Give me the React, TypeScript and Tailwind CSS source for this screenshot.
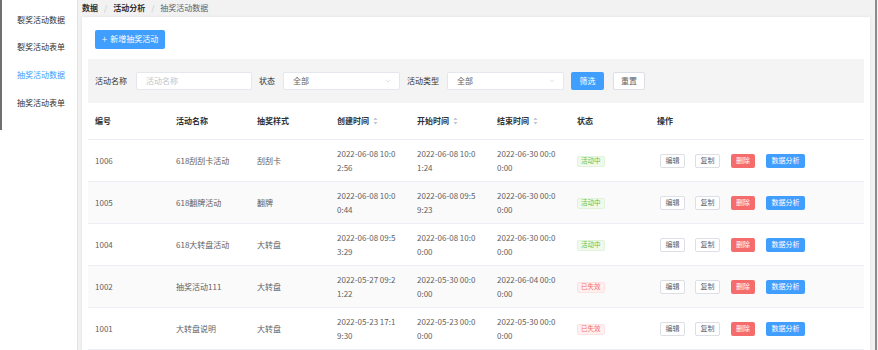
import { ChevronDown } from "lucide-react";

type Row = {
  id: string;
  name: string;
  style: string;
  created: string;
  start: string;
  end: string;
  active: boolean;
};

const rows: Row[] = [
  { id: "1006", name: "618刮刮卡活动", style: "刮刮卡", created: "2022-06-08 10:02:56", start: "2022-06-08 10:01:24", end: "2022-06-30 00:00:00", active: true },
  { id: "1005", name: "618翻牌活动", style: "翻牌", created: "2022-06-08 10:00:44", start: "2022-06-08 09:59:23", end: "2022-06-30 00:00:00", active: true },
  { id: "1004", name: "618大转盘活动", style: "大转盘", created: "2022-06-08 09:53:29", start: "2022-06-08 10:00:00", end: "2022-06-30 00:00:00", active: true },
  { id: "1002", name: "抽奖活动111", style: "大转盘", created: "2022-05-27 09:21:22", start: "2022-05-30 00:00:00", end: "2022-06-04 00:00:00", active: false },
  { id: "1001", name: "大转盘说明", style: "大转盘", created: "2022-05-23 17:19:30", start: "2022-05-23 00:00:00", end: "2022-05-30 00:00:00", active: false },
];

const menu = ["裂奖活动数据", "裂奖活动表单", "抽奖活动数据", "抽奖活动表单"];

const SortIcon = () => (
  <svg width="5" height="8" viewBox="0 0 5 8" className="ml-[4px]">
    <path d="M2.5 0.5 L4.5 3 L0.5 3 Z" fill="#c0c4cc" />
    <path d="M2.5 7.5 L4.5 5 L0.5 5 Z" fill="#c0c4cc" />
  </svg>
);

const Select = ({ w }: { w: string }) => (
  <div
    className={`${w} h-[18px] bg-white border border-[#e4e7ed] rounded-[2px] flex items-center justify-between pl-[9px] pr-[7px] text-[#606266]`}
  >
    <span>全部</span>
    <ChevronDown size={8} className="text-[#c0c4cc]" strokeWidth={1.5} />
  </div>
);

const App = () => {
  return (
    <div className="w-[878px] h-[350px] overflow-hidden flex bg-[#f2f2f2] text-[8px] font-['Noto_Sans_CJK_SC','Noto_Sans',sans-serif] text-[#606266]">
      {/* Sidebar */}
      <aside className="w-[78px] shrink-0 bg-white flex">
        <div className="w-[2px] h-[130px] bg-[#6f6f6f]" />
        <div className="flex-1 pt-[6px] pl-[15px] flex flex-col">
          {menu.map((m, i) => (
            <div
              key={m}
              className={`h-[27.6px] flex items-center ${i === 2 ? "text-[#409eff]" : "text-[#303133]"}`}
            >
              {m}
            </div>
          ))}
        </div>
        <div className="w-[1px] bg-[#e2e2e2]" />
      </aside>

      {/* Main */}
      <main className="flex-1 min-w-0 pl-[4px] pr-[5px] flex flex-col">
        <div className="h-[21px] pt-[3px] leading-[10px] flex items-start gap-[6px] text-[#303133]">
          <span className="font-bold">数据</span>
          <span className="text-[#c0c4cc]">/</span>
          <span className="font-bold">活动分析</span>
          <span className="text-[#c0c4cc]">/</span>
          <span className="text-[#606266]">抽奖活动数据</span>
        </div>

        <div className="flex-1 bg-white shadow-[0_0_3px_rgba(0,0,0,0.08)] px-[6px] pt-[13px]">
          <button className="ml-[7px] w-[70px] h-[19px] bg-[#409eff] text-white rounded-[2px] flex items-center justify-center gap-[3px]">
            <span className="text-[10px] leading-none font-light">+</span>
            <span>新增抽奖活动</span>
          </button>

          {/* Filter bar */}
          <div className="mt-[10px] h-[44px] bg-[#f4f4f5] flex items-center pl-[7px]">
            <span className="text-[#303133]">活动名称</span>
            <div className="ml-[9px] w-[116px] h-[18px] bg-white border border-[#e4e7ed] rounded-[2px] flex items-center pl-[9px] text-[#c0c4cc]">
              活动名称
            </div>
            <span className="ml-[7px] text-[#303133]">状态</span>
            <div className="ml-[8px]">
              <Select w="w-[117px]" />
            </div>
            <span className="ml-[7px] text-[#303133]">活动类型</span>
            <div className="ml-[8px]">
              <Select w="w-[117px]" />
            </div>
            <button className="ml-[7px] w-[33px] h-[18px] bg-[#409eff] text-white rounded-[2px]">
              筛选
            </button>
            <button className="ml-[9px] w-[32px] h-[18px] bg-white border border-[#dcdfe6] text-[#606266] rounded-[2px]">
              重置
            </button>
          </div>

          {/* Table */}
          <table className="w-full table-fixed border-collapse">
            <colgroup>
              <col className="w-[81px]" />
              <col className="w-[81px]" />
              <col className="w-[80px]" />
              <col className="w-[80px]" />
              <col className="w-[80px]" />
              <col className="w-[80px]" />
              <col className="w-[80px]" />
              <col />
            </colgroup>
            <thead>
              <tr className="h-[37px] border-b border-[#ebeef5] text-[#303133] text-left">
                <th className="pl-[7px] font-bold">编号</th>
                <th className="pl-[7px] font-bold">活动名称</th>
                <th className="pl-[7px] font-bold">抽奖样式</th>
                <th className="pl-[7px] font-bold">
                  <span className="flex items-center">创建时间<SortIcon /></span>
                </th>
                <th className="pl-[7px] font-bold">
                  <span className="flex items-center">开始时间<SortIcon /></span>
                </th>
                <th className="pl-[7px] font-bold">
                  <span className="flex items-center">结束时间<SortIcon /></span>
                </th>
                <th className="pl-[7px] font-bold">状态</th>
                <th className="pl-[7px] font-bold">操作</th>
              </tr>
            </thead>
            <tbody>
              {rows.map((r, i) => (
                <tr
                  key={r.id}
                  className={`h-[42px] border-b border-[#ebeef5] ${i % 2 === 1 ? "bg-[#fafafa]" : "bg-white"}`}
                >
                  <td className="pl-[7px]">{r.id}</td>
                  <td className="pl-[7px]">{r.name}</td>
                  <td className="pl-[7px]">{r.style}</td>
                  {[r.created, r.start, r.end].map((d, k) => (
                    <td key={k} className="pl-[7px]">
                      <div className="w-[63px] break-all leading-[14px]">{d}</div>
                    </td>
                  ))}
                  <td className="pl-[7px]">
                    {r.active ? (
                      <span className="inline-flex items-center h-[11px] px-[3px] text-[6.5px] bg-[#f0f9eb] border border-[#e1f3d8] text-[#67c23a] rounded-[2px]">
                        活动中
                      </span>
                    ) : (
                      <span className="inline-flex items-center h-[11px] px-[3px] text-[6.5px] bg-[#fef0f0] border border-[#fde2e2] text-[#f56c6c] rounded-[2px]">
                        已失效
                      </span>
                    )}
                  </td>
                  <td className="pl-[10px]">
                    <div className="flex items-center text-[7px]">
                      <button className="w-[25px] h-[14px] bg-white border border-[#dcdfe6] rounded-[2px] text-[#606266]">
                        编辑
                      </button>
                      <button className="ml-[10px] w-[25px] h-[14px] bg-white border border-[#dcdfe6] rounded-[2px] text-[#606266]">
                        复制
                      </button>
                      <button className="ml-[11px] w-[24px] h-[14px] bg-[#f56c6c] rounded-[2px] text-white">
                        删除
                      </button>
                      <button className="ml-[11px] w-[39px] h-[14px] bg-[#409eff] rounded-[2px] text-white">
                        数据分析
                      </button>
                    </div>
                  </td>
                </tr>
              ))}
            </tbody>
          </table>
        </div>
      </main>

      <div className="w-[3px] shrink-0 border-l-2 border-[#8c8c8c] bg-[#f2f2f2]" />
    </div>
  );
};

export default App;
